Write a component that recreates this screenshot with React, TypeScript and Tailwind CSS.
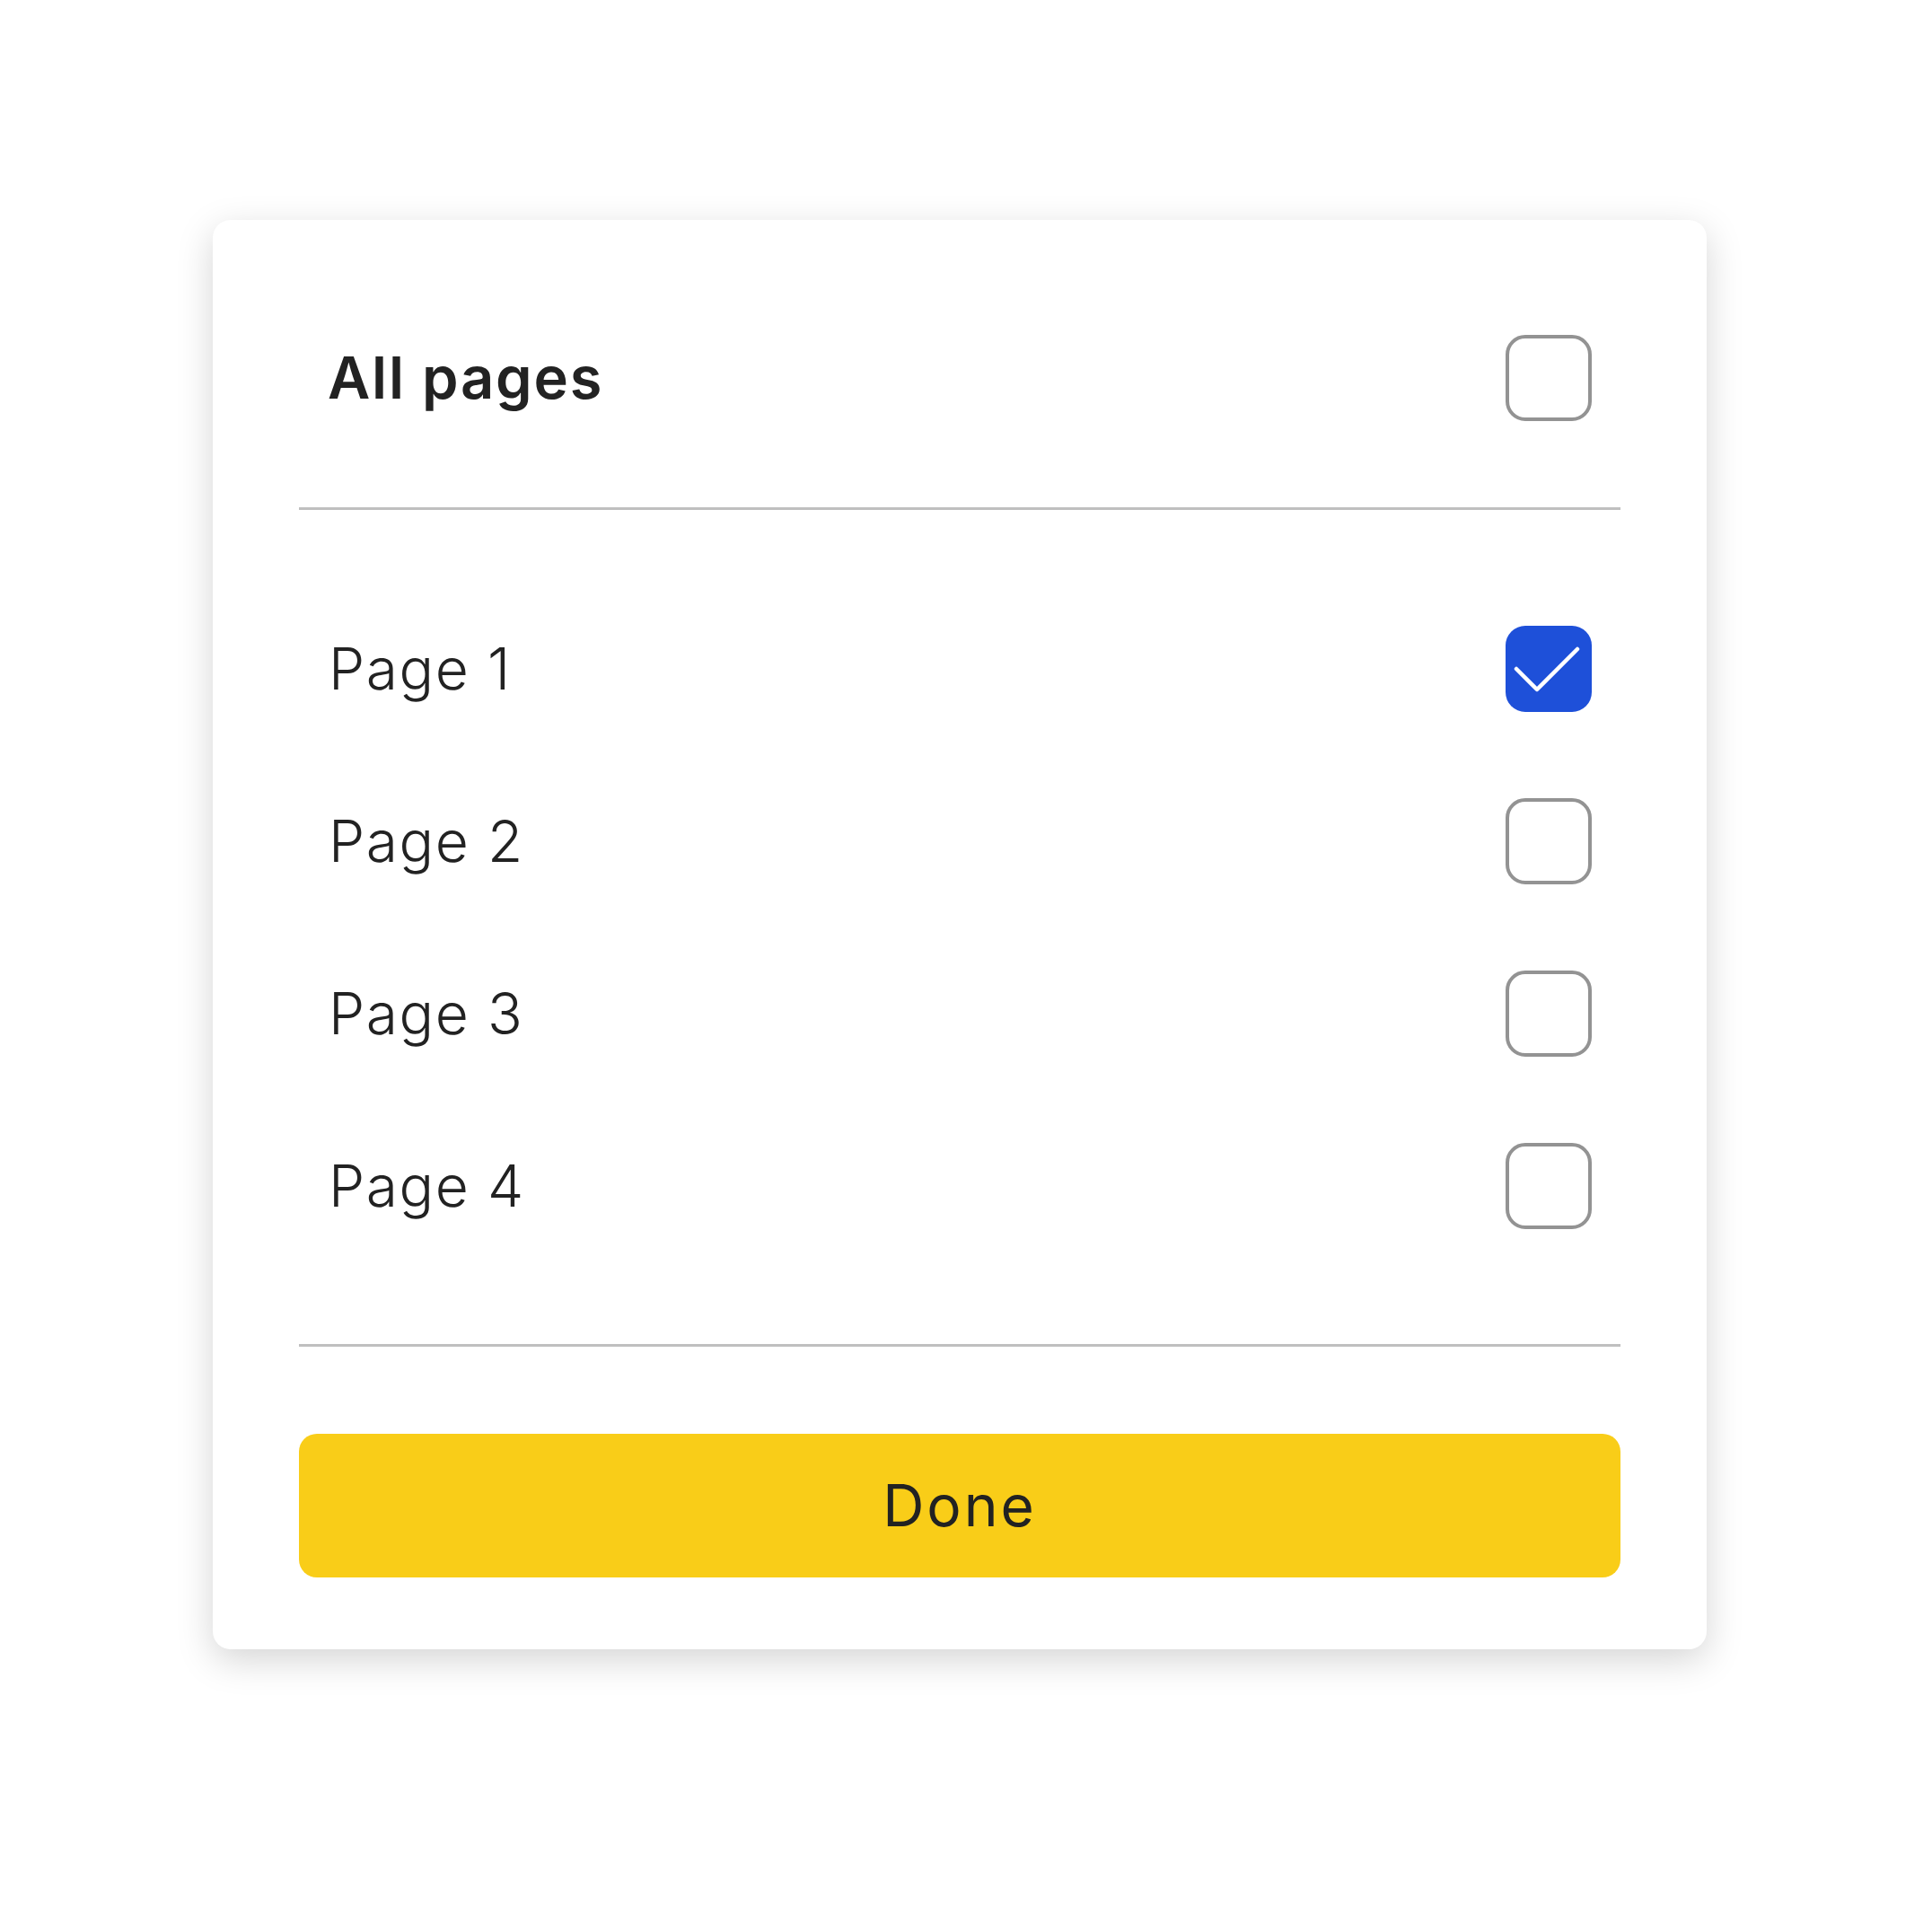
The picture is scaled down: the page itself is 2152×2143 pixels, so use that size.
import { useState } from "react";

const pages = ["Page 1", "Page 2", "Page 3", "Page 4"];

const CheckBox = ({ checked, onClick }: { checked: boolean; onClick: () => void }) => (
  <button
    onClick={onClick}
    className={
      checked
        ? "w-[96px] h-[96px] rounded-[22px] bg-[#1e50d9] flex items-center justify-center shrink-0"
        : "w-[96px] h-[96px] rounded-[22px] border-[4px] border-[#939393] bg-white shrink-0"
    }
  >
    {checked && (
      <svg viewBox="0 0 96 96" className="w-[96px] h-[96px]">
        <path
          d="M12 48 L35 71 L80 26"
          fill="none"
          stroke="white"
          strokeWidth="4.5"
          strokeLinecap="round"
          strokeLinejoin="round"
        />
      </svg>
    )}
  </button>
);

export default function App() {
  const [selected, setSelected] = useState<boolean[]>([true, false, false, false]);
  const allSelected = selected.every(Boolean);

  const toggle = (i: number) =>
    setSelected(selected.map((s, idx) => (idx === i ? !s : s)));

  return (
    <div
      className="w-[2152px] h-[2143px] bg-white pl-[237px] pt-[245px]"
      style={{ fontFamily: "Inter, 'Noto Sans', sans-serif" }}
    >
      <div className="w-[1664px] rounded-[20px] bg-white shadow-[0_12px_40px_rgba(0,0,0,0.17)] px-[96px] pt-[80px] pb-[80px] text-[#222222]">
        <div className="h-[192px] px-[32px] flex items-center justify-between mb-[48px]">
          <span className="text-[65px] font-semibold tracking-[1.8px]">All pages</span>
          <CheckBox
            checked={allSelected}
            onClick={() => setSelected(pages.map(() => !allSelected))}
          />
        </div>
        <div className="h-[3px] bg-[#bfbfbf]" />

        <div className="pt-[81px] pb-[80px]">
          {pages.map((p, i) => (
            <div key={p} className="h-[192px] px-[32px] flex items-center justify-between">
              <span className="pl-[1px] text-[64px] font-light tracking-[1.6px]">{p}</span>
              <CheckBox checked={selected[i]} onClick={() => toggle(i)} />
            </div>
          ))}
        </div>

        <div className="h-[3px] bg-[#bfbfbf]" />

        <button className="mt-[97px] w-full h-[160px] rounded-[20px] bg-[#f9cd18] flex items-center justify-center text-[64px] tracking-[3px] text-[#222222]">
          Done
        </button>
      </div>
    </div>
  );
}
